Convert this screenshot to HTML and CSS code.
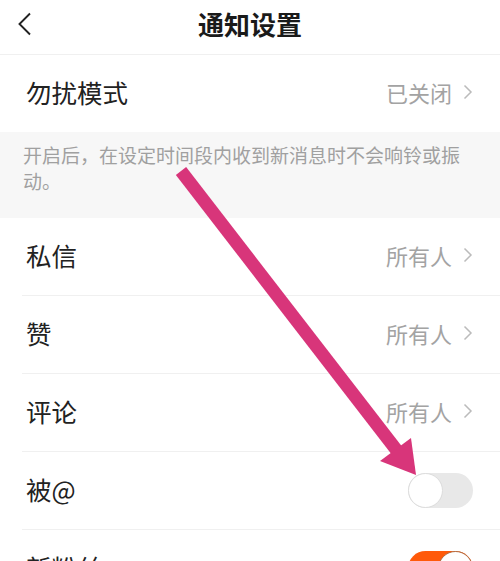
FILE: index.html
```html
<!DOCTYPE html>
<html lang="zh-CN">
<head>
<meta charset="utf-8">
<link rel="stylesheet" href="styles.css">
</head>
<body>
<div class="page">
  <header class="header">
    <svg class="back" width="16" height="24" viewBox="0 0 16 24"><path d="M13 1.5 L2.5 12 L13 22.5" fill="none" stroke="#222" stroke-width="1.9"/></svg>
    <div class="title">通知设置</div>
  </header>
  <div class="row first">
    <span class="label">勿扰模式</span>
    <span class="value">已关闭<svg class="chev" width="10" height="16" viewBox="0 0 10 16"><path d="M1.5 1.5 L8 8 L1.5 14.5" fill="none" stroke="#bbb" stroke-width="1.5"/></svg></span>
  </div>
  <div class="note">开启后，在设定时间段内收到新消息时不会响铃或振动。</div>
  <div class="list">
    <div class="row">
      <span class="label">私信</span>
      <span class="value">所有人<svg class="chev" width="10" height="16" viewBox="0 0 10 16"><path d="M1.5 1.5 L8 8 L1.5 14.5" fill="none" stroke="#bbb" stroke-width="1.5"/></svg></span>
    </div>
    <div class="row">
      <span class="label">赞</span>
      <span class="value">所有人<svg class="chev" width="10" height="16" viewBox="0 0 10 16"><path d="M1.5 1.5 L8 8 L1.5 14.5" fill="none" stroke="#bbb" stroke-width="1.5"/></svg></span>
    </div>
    <div class="row">
      <span class="label">评论</span>
      <span class="value">所有人<svg class="chev" width="10" height="16" viewBox="0 0 10 16"><path d="M1.5 1.5 L8 8 L1.5 14.5" fill="none" stroke="#bbb" stroke-width="1.5"/></svg></span>
    </div>
    <div class="row toggle-row">
      <span class="label">被@</span>
      <span class="toggle off"><span class="knob"></span></span>
    </div>
    <div class="row toggle-row">
      <span class="label">新粉丝</span>
      <span class="toggle on"><span class="knob"></span></span>
    </div>
  </div>
  <svg class="arrow" width="500" height="561" viewBox="0 0 500 561">
    <line x1="181" y1="171" x2="398" y2="452" stroke="#d8357a" stroke-width="13"/>
    <polygon points="380,461 411,438 416,475" fill="#d8357a"/>
  </svg>
</div>
</body>
</html>
```
FILE: styles.css
```css
* { box-sizing: border-box; }
html, body { margin: 0; padding: 0; background: #fff; }
body {
  font-family: "Noto Sans CJK SC", "Noto Sans", sans-serif;
  color: #222;
}
.page {
  position: relative;
  width: 500px;
  height: 561px;
  overflow: hidden;
}
.header {
  height: 55px;
  border-bottom: 1px solid #f0f0f0;
  display: flex;
  align-items: center;
  justify-content: center;
  position: relative;
}
.back {
  position: absolute;
  left: 17px;
  top: 12px;
}
.title {
  font-size: 26px;
  font-weight: 700;
  line-height: 1;
  margin-top: -6px;
  color: #1a1a1a;
}
.row {
  height: 78px;
  display: flex;
  align-items: center;
  justify-content: space-between;
  padding: 0 27px 4px 26px;
  border-bottom: 1px solid #f0f0f0;
}
.row.first {
  height: 77px;
  border-bottom: none;
}
.row.toggle-row {
  padding-bottom: 0;
}
.row.toggle-row .label {
  margin-top: -4px;
}
.list .row {
  margin-left: 22px;
  padding-left: 4px;
}
.label {
  font-size: 25.5px;
  color: #222;
  line-height: 1;
}
.value {
  font-size: 22px;
  color: #a3a3a3;
  display: flex;
  align-items: center;
  gap: 11px;
  line-height: 1;
}
.chev { display: block; }
.note {
  background: #f7f7f7;
  padding: 10px 12px 24px 23px;
  font-size: 19px;
  line-height: 26px;
  color: #a0a0a0;
  height: 86px;
}
.toggle {
  width: 65px;
  height: 35px;
  border-radius: 18px;
  position: relative;
  display: block;
}
.toggle.off { background: #e8e8e8; }
.toggle.on { background: #ff5a0a; }
.knob {
  position: absolute;
  top: 0;
  width: 35px;
  height: 35px;
  border-radius: 50%;
  background: #fff;
  border: 1px solid #dcdcdc;
}
.toggle.off .knob { left: 0; }
.toggle.on .knob { right: 0; border-color: #b06a40; }
.arrow {
  position: absolute;
  left: 0;
  top: 0;
  pointer-events: none;
}
```
